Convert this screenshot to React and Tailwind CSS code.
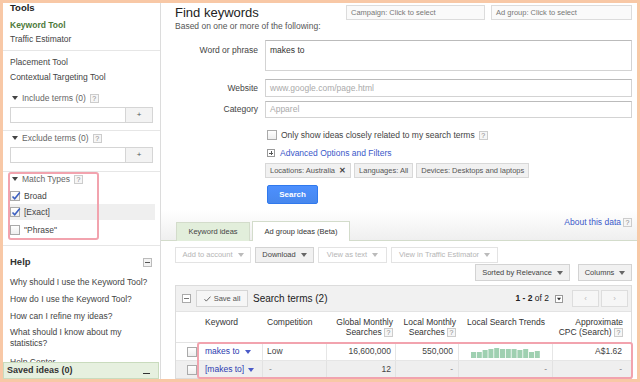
import React from "react";

const font = "font-['Liberation_Sans',Arial,sans-serif]";

function Help() {
  return (
    <span className="inline-flex h-[9px] w-[9px] items-center justify-center border border-[#ccc] bg-[#f6f6f6] text-[7px] leading-none text-[#888]">
      ?
    </span>
  );
}

function Tri({ className = "" }) {
  return (
    <svg width="6" height="4" viewBox="0 0 6 4" className={className}>
      <path d="M0 0h6L3 4z" fill="currentColor" />
    </svg>
  );
}

function Check({ checked }) {
  return (
    <span className="relative inline-block h-[10px] w-[10px] border border-[#aaa] bg-gradient-to-b from-white to-[#eee]">
      {checked && (
        <svg width="10" height="10" viewBox="0 0 10 10" className="absolute left-[0px] top-[-1px]">
          <path d="M1.5 5.5l2.2 2.3L8.8 1.5" stroke="#3b5fc0" strokeWidth="1.6" fill="none" />
        </svg>
      )}
    </span>
  );
}

function Sidebar() {
  const terms = (label) => (
    <div className="flex h-[14px] items-center gap-[4px] pl-[9px] text-[#666]">
      <Tri className="text-[#444]" />
      <span>{label}</span>
      <Help />
    </div>
  );
  const termInput = (
    <div className="mx-[7px] mt-[2px] flex h-[16px] border border-[#d5d5d5]">
      <div className="flex-1 bg-white" />
      <div className="flex w-[27px] items-center justify-center border-l border-[#d5d5d5] bg-[#f3f3f3] text-[8px] text-[#555]">
        +
      </div>
    </div>
  );
  return (
    <aside className="relative h-full w-[158px] shrink-0 overflow-hidden border-r border-[#dcdcdc] text-[8.5px] text-[#444]">
      <div className="h-[10px] pl-[7px] text-[9.5px] font-bold leading-[10px] text-[#222]">Tools</div>
      <div className="mt-[5px] h-[14px] pl-[7px] font-bold leading-[14px] text-[#4d7a3a]">Keyword Tool</div>
      <div className="h-[14px] pl-[7px] leading-[14px]">Traffic Estimator</div>
      <div className="mt-[4px] border-t border-[#e6e6e6]" />
      <div className="mt-[4px] h-[14px] pl-[7px] leading-[14px]">Placement Tool</div>
      <div className="mt-[1px] h-[14px] pl-[7px] leading-[14px]">Contextual Targeting Tool</div>
      <div className="mt-[7px]">{terms("Include terms (0)")}</div>
      {termInput}
      <div className="mt-[7px] border-t border-[#e6e6e6]" />
      {terms("Exclude terms (0)")}
      {termInput}
      <div className="mt-[8px] border-t border-[#e6e6e6]" />
      {terms("Match Types")}
      <div className="mt-[3px] flex h-[14px] items-center gap-[4px] pl-[7px]">
        <Check checked />
        <span>Broad</span>
      </div>
      <div className="mx-[5px] mt-[1px] flex h-[16px] items-center gap-[4px] bg-[#efefef] pl-[2px]">
        <Check checked />
        <span>[Exact]</span>
      </div>
      <div className="mt-[3px] flex h-[14px] items-center gap-[4px] pl-[7px]">
        <Check />
        <span>"Phrase"</span>
      </div>
      <div className="mt-[8px] border-t border-[#e6e6e6]" />
      <div className="mt-[9px] flex h-[14px] items-center justify-between pl-[7px] pr-[8px]">
        <span className="text-[9.5px] font-bold text-[#333]">Help</span>
        <span className="flex h-[9px] w-[9px] items-center justify-center border border-[#bbb] bg-[#f3f3f3]">
          <span className="h-[1px] w-[5px] bg-[#555]" />
        </span>
      </div>
      <div className="mt-[6px] h-[14px] pl-[7px] leading-[14px]">Why should I use the Keyword Tool?</div>
      <div className="mt-[3px] h-[14px] pl-[7px] leading-[14px]">How do I use the Keyword Tool?</div>
      <div className="mt-[3px] h-[14px] pl-[7px] leading-[14px]">How can I refine my ideas?</div>
      <div className="mt-[4px] pl-[7px] leading-[11px]">
        What should I know about my
        <br />
        statistics?
      </div>
      <div className="mt-[6px] h-[14px] pl-[7px] leading-[14px]">Help Center</div>
      <div className="absolute bottom-0 left-0 right-[1px] flex h-[17px] items-center justify-between border border-[#c9dbbd] bg-[#e6f0df] pl-[3px] pr-[8px]">
        <span className="text-[9px] font-bold text-[#333]">Saved ideas (0)</span>
        <span className="mt-[6px] h-[1px] w-[7px] bg-[#333]" />
      </div>
      <div className="absolute left-[5px] top-[169px] h-[68px] w-[91px] rounded-[3px] border-2 border-[#f2a3ae]" />
    </aside>
  );
}

function Btn({ children, active, className = "" }) {
  return (
    <div
      className={`flex h-full items-center justify-center gap-[5px] border text-[7.5px] ${
        active ? "border-[#d3d3d3] bg-[#f1f1f1] text-[#444]" : "border-[#e3e3e3] bg-white text-[#b5b5b5]"
      } ${className}`}
    >
      {children}
      <Tri className={active ? "text-[#666]" : "text-[#bbb]"} />
    </div>
  );
}

function Trends() {
  const h = [6, 6, 8, 9, 10, 9, 9, 9, 8, 9, 6, 7];
  return (
    <svg width="70" height="12" viewBox="0 0 70 12">
      {h.map((v, i) => (
        <rect key={i} x={i * 5.8} y={12 - v} width="5" height={v} fill="#9fd0b1" />
      ))}
    </svg>
  );
}

function Table() {
  const cols = "grid grid-cols-[23px_64px_64px_69px_63px_94px_80px]";
  return (
    <div className="mt-[4px] border border-[#dcdcdc]">
      <div className="flex h-[25px] items-center bg-[#f1f1f1] pl-[6px] pr-[3px]">
        <span className="flex h-[9px] w-[9px] items-center justify-center border border-[#aaa] bg-white">
          <span className="h-[1px] w-[5px] bg-[#777]" />
        </span>
        <div className="ml-[5px] flex h-[17px] w-[52px] items-center justify-center gap-[3px] border border-[#d5d5d5] bg-[#f6f6f6] text-[7.5px] text-[#555]">
          <svg width="7" height="6" viewBox="0 0 7 6">
            <path d="M0.5 3.2l1.8 1.9L6.5 0.6" stroke="#666" strokeWidth="1" fill="none" />
          </svg>
          Save all
        </div>
        <span className="ml-[5px] text-[10px] text-[#222]">Search terms (2)</span>
        <div className="ml-auto flex items-center">
          <span className="text-[8.5px] text-[#222]">
            <b className="font-bold">1 - 2</b> of 2
          </span>
          <span className="ml-[6px] flex h-[8px] w-[8px] items-center justify-center border border-[#999] bg-white">
            <Tri className="scale-75 text-[#333]" />
          </span>
          <div className="ml-[9px] flex h-[17px] w-[27px] items-center justify-center border border-[#ddd] bg-[#f6f6f6] text-[8px] text-[#bbb]">
            ‹
          </div>
          <div className="ml-[2px] flex h-[17px] w-[27px] items-center justify-center border border-[#ddd] bg-[#f6f6f6] text-[8px] text-[#bbb]">
            ›
          </div>
        </div>
      </div>
      <div className={`${cols} h-[32px] border-b border-t border-[#e3e3e3] bg-white pt-[5px] text-[8.5px] leading-[10px] text-[#333]`}>
        <div />
        <div className="pl-[6px]">Keyword</div>
        <div className="pl-[4px]">Competition</div>
        <div className="pr-[3px] text-right">
          Global Monthly
          <br />
          Searches <Help />
        </div>
        <div className="pr-[3px] text-right">
          Local Monthly
          <br />
          Searches <Help />
        </div>
        <div className="text-center">Local Search Trends</div>
        <div className="pr-[10px] text-right">
          Approximate
          <br />
          CPC (Search) <Help />
        </div>
      </div>
      <div className={`${cols} h-[18px] border-b border-[#e6e6e6] bg-white text-[8.5px] text-[#444]`}>
        <div className="flex items-center pl-[11px]">
          <Check />
        </div>
        <div className="flex items-center gap-[5px] border-r border-[#e6e6e6] pl-[6px] text-[#2c3cb0]">
          makes to <Tri className="text-[#4a5ac8]" />
        </div>
        <div className="flex items-center border-r border-[#e6e6e6] pl-[4px]">Low</div>
        <div className="flex items-center justify-end border-r border-[#e6e6e6] pr-[4px]">16,600,000</div>
        <div className="flex items-center justify-end border-r border-[#e6e6e6] pr-[5px]">550,000</div>
        <div className="flex items-center justify-center border-r border-[#e6e6e6] pt-[1px]">
          <Trends />
        </div>
        <div className="flex items-center justify-end pr-[11px]">A$1.62</div>
      </div>
      <div className={`${cols} h-[17px] bg-[#efefef] text-[8.5px] text-[#444]`}>
        <div className="flex items-center pl-[11px]">
          <Check />
        </div>
        <div className="flex items-center gap-[4px] border-r border-[#e2e2e2] pl-[6px] text-[#2c3cb0]">
          [makes to] <Tri className="text-[#4a5ac8]" />
        </div>
        <div className="flex items-center border-r border-[#e2e2e2] pl-[6px] text-[#888]">-</div>
        <div className="flex items-center justify-end border-r border-[#e2e2e2] pr-[4px]">12</div>
        <div className="flex items-center justify-end border-r border-[#e2e2e2] pr-[5px] text-[#888]">-</div>
        <div className="flex items-center justify-end border-r border-[#e2e2e2] pr-[5px] text-[#888]">-</div>
        <div className="flex items-center justify-end pr-[11px] text-[#888]">-</div>
      </div>
    </div>
  );
}

function Main() {
  const label = "pr-[7px] text-right text-[8.5px] text-[#444]";
  return (
    <main className="relative flex min-w-0 flex-1 flex-col text-[8.5px] text-[#444]">
      <div className="px-[14px] pr-[5px]">
        <div className="mt-[2px] flex h-[15px] items-center">
          <span className="text-[13px] leading-[15px] text-[#222]">Find keywords</span>
          <div className="ml-auto flex h-full gap-[6px]">
            <div className="flex w-[139px] items-center border border-[#dcdcdc] bg-[#fafafa] pl-[4px] text-[7.5px] text-[#777]">
              Campaign: Click to select
            </div>
            <div className="flex w-[141px] items-center border border-[#dcdcdc] bg-[#fafafa] pl-[4px] text-[7.5px] text-[#777]">
              Ad group: Click to select
            </div>
          </div>
        </div>
        <div className="mt-[1px] h-[10px] leading-[10px] text-[#555]">Based on one or more of the following:</div>
        <div className="mt-[9px] grid grid-cols-[90px_1fr] items-start">
          <div className={`${label} pt-[4px]`}>Word or phrase</div>
          <div className="h-[31px] border border-[#d3d3d3] border-t-[#bbb] pl-[4px] pt-[3px] text-[#333]">makes to</div>
        </div>
        <div className="mt-[8px] grid grid-cols-[90px_1fr] items-center">
          <div className={label}>Website</div>
          <div className="flex h-[18px] items-center border border-[#d3d3d3] border-t-[#bbb] pl-[4px] text-[#aaa]">
            www.google.com/page.html
          </div>
        </div>
        <div className="mt-[4px] grid grid-cols-[90px_1fr] items-center">
          <div className={label}>Category</div>
          <div className="flex h-[17px] items-center border border-[#d3d3d3] border-t-[#bbb] pl-[4px] text-[#aaa]">Apparel</div>
        </div>
        <div className="ml-[92px] mt-[11px] flex h-[12px] items-center gap-[4px] text-[#444]">
          <Check />
          <span>Only show ideas closely related to my search terms</span>
          <Help />
        </div>
        <div className="ml-[92px] mt-[6px] flex h-[12px] items-center gap-[5px] text-[#3a58c9]">
          <span className="relative flex h-[8px] w-[8px] items-center justify-center border border-[#999]">
            <span className="absolute h-[1px] w-[4px] bg-[#555]" />
            <span className="absolute h-[4px] w-[1px] bg-[#555]" />
          </span>
          <span>Advanced Options and Filters</span>
        </div>
        <div className="ml-[90px] mt-[4px] flex h-[15px] gap-[3px] text-[7.5px] text-[#555]">
          <div className="flex items-center gap-[4px] border border-[#d8d8d8] bg-[#f1f1f1] px-[4px]">
            Locations: Australia <span className="text-[8px] font-bold text-[#444]">✕</span>
          </div>
          <div className="flex items-center border border-[#d8d8d8] bg-[#f1f1f1] px-[4px]">Languages: All</div>
          <div className="flex items-center border border-[#d8d8d8] bg-[#f1f1f1] px-[4px]">Devices: Desktops and laptops</div>
        </div>
        <div className="ml-[92px] mt-[7px] flex h-[19px] w-[51px] items-center justify-center rounded-[2px] border border-[#3079ed] bg-gradient-to-b from-[#4d90fe] to-[#4787ed] text-[8px] font-bold text-white">
          Search
        </div>
      </div>
      <div className="mt-[6px] flex h-[31px] items-end border-b border-[#d3dccb] bg-gradient-to-b from-white to-[#efefef] pl-[15px] pr-[5px]">
        <div className="mb-[-1px] flex h-[19px] w-[74px] items-center justify-center border border-b-0 border-[#d3dccb] bg-[#e2eedb] text-[7.5px] text-[#444]">
          Keyword ideas
        </div>
        <div className="mb-[-1px] ml-[2px] flex h-[20px] w-[98px] items-center justify-center border border-b-0 border-[#d3dccb] bg-white text-[7.5px] text-[#333]">
          Ad group ideas (Beta)
        </div>
        <div className="mb-[11px] ml-auto flex items-center gap-[2px] text-[8.5px] text-[#3a58c9]">
          About this data <Help />
        </div>
      </div>
      <div className="px-[14px] pr-[5px]">
        <div className="mt-[6px] flex h-[16px] gap-[4px]">
          <Btn className="w-[76px]">Add to account</Btn>
          <Btn active className="w-[59px]">
            Download
          </Btn>
          <Btn className="w-[69px]">View as text</Btn>
          <Btn className="w-[107px]">View in Traffic Estimator</Btn>
        </div>
        <div className="mt-[1px] flex h-[17px] justify-end gap-[8px]">
          <Btn active className="w-[95px]">
            Sorted by Relevance
          </Btn>
          <Btn active className="w-[54px]">
            Columns
          </Btn>
        </div>
        <Table />
      </div>
      <div className="absolute left-[36px] top-[339px] h-[37px] w-[436px] rounded-[3px] border-2 border-[#f2a3ae]" />
    </main>
  );
}

export default function App() {
  return (
    <div className={`${font} relative flex h-[382px] w-[640px] overflow-hidden border-[3px] border-[#f8c8a6] bg-white`}>
      <Sidebar />
      <Main />
    </div>
  );
}
